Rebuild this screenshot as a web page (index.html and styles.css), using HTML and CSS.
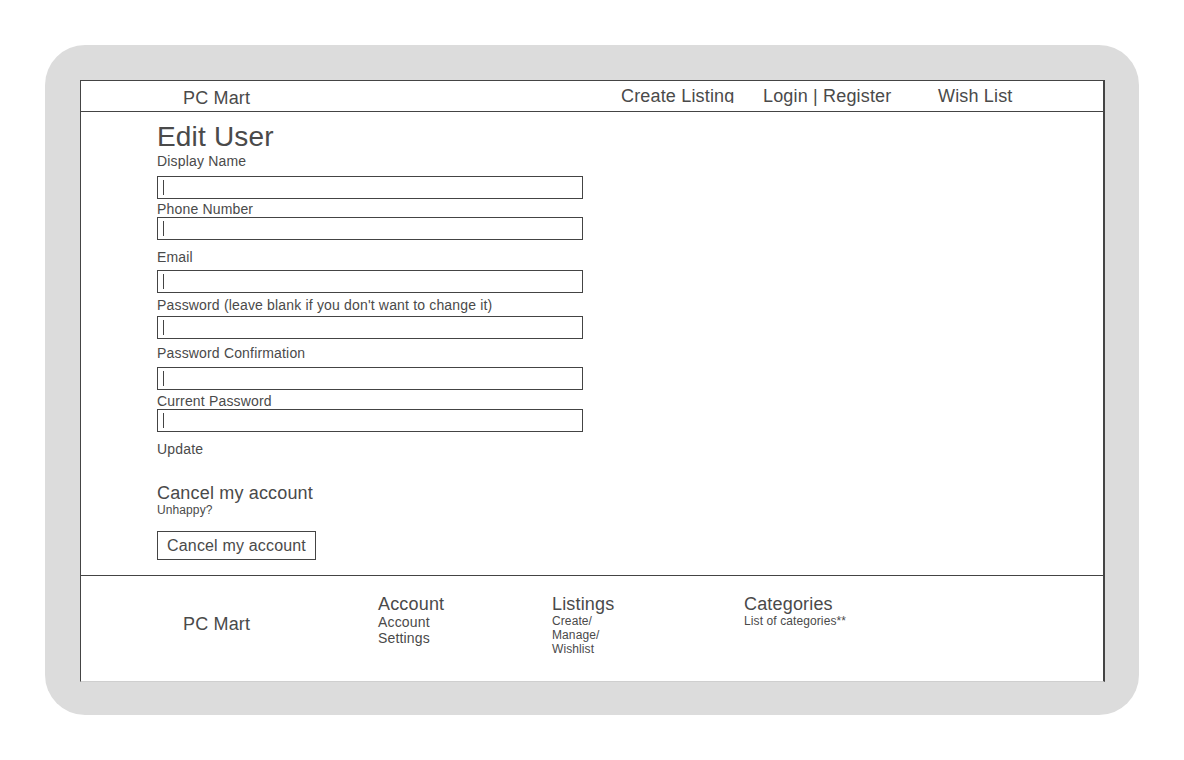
FILE: index.html
```html
<!DOCTYPE html>
<html lang="en">
<head>
<meta charset="utf-8">
<title>PC Mart - Edit User</title>
<link rel="stylesheet" href="styles.css">
</head>
<body>
<div class="frame">
  <div class="panel">
    <header class="topbar">
      <div class="brand">PC Mart</div>
      <div class="nav nav-create"><span class="clip">Create Listing</span></div>
      <div class="nav nav-login">Login | Register</div>
      <div class="nav nav-wish">Wish List</div>
    </header>
    <main class="content">
      <h1 class="title">Edit User</h1>
      <div class="label">Display Name</div>
      <div class="field f1"></div>
      <div class="label l2">Phone Number</div>
      <div class="field f2"></div>
      <div class="label l3">Email</div>
      <div class="field f3"></div>
      <div class="label l4">Password (leave blank if you don't want to change it)</div>
      <div class="field f4"></div>
      <div class="label l5">Password Confirmation</div>
      <div class="field f5"></div>
      <div class="label l6">Current Password</div>
      <div class="field f6"></div>
      <div class="label l7">Update</div>
      <h2 class="subtitle">Cancel my account</h2>
      <div class="small">Unhappy?</div>
      <div class="button">Cancel my account</div>
    </main>
    <footer class="footer">
      <div class="fbrand">PC Mart</div>
      <div class="fcol fcol-account">
        <div class="fhead">Account</div>
        <div class="fmid">Account<br>Settings</div>
      </div>
      <div class="fcol fcol-listings">
        <div class="fhead">Listings</div>
        <div class="fsmall">Create/<br>Manage/<br>Wishlist</div>
      </div>
      <div class="fcol fcol-cat">
        <div class="fhead">Categories</div>
        <div class="fsmall">List of categories**</div>
      </div>
    </footer>
  </div>
</div>
</body>
</html>
```
FILE: styles.css
```css
* { box-sizing: border-box; }
html, body { margin: 0; padding: 0; background: #ffffff; }
body {
  font-family: "Liberation Sans", Arial, sans-serif;
  color: #4a4a4a;
  letter-spacing: 0.17px;
  width: 1184px;
  height: 760px;
  overflow: hidden;
}
.frame {
  margin: 45px 0 0 45px;
  width: 1094px;
  height: 670px;
  background: #dcdcdc;
  border-radius: 40px;
  padding: 35px 0 0 35px;
}
.panel {
  width: 1025px;
  height: 602px;
  background: #ffffff;
  border-top: 1px solid #444;
  border-left: 1px solid #444;
  border-right: 2px solid #444;
  border-bottom: 1px solid #cfcfcf;
  display: flex;
  flex-direction: column;
}
.topbar {
  height: 31px;
  border-bottom: 1px solid #444;
  display: flex;
  align-items: flex-start;
  font-size: 18px;
  line-height: 20px;
  flex: none;
}
.brand { margin: 7px 0 0 102px; width: 438px; }
.nav { margin-top: 5px; }
.nav-create { width: 142px; height: 17px; overflow: hidden; }
.nav-login { width: 175px; }
.content {
  flex: 1;
  padding: 9px 0 0 76px;
}
.title {
  margin: 0;
  font-size: 28px;
  font-weight: normal;
  line-height: 32px;
}
.label {
  font-size: 14px;
  line-height: 16px;
}
.field {
  position: relative;
  width: 426px;
  height: 23px;
  border: 1px solid #444;
}
.field::after {
  content: "";
  position: absolute;
  left: 5px;
  top: 3px;
  width: 1px;
  height: 15px;
  background: #444;
}
.f1 { margin-top: 7px; }
.l2 { margin-top: 2px; }
.l3 { margin-top: 9px; }
.f3 { margin-top: 5px; }
.l4 { margin-top: 4px; }
.f4 { margin-top: 3px; }
.l5 { margin-top: 6px; }
.f5 { margin-top: 6px; }
.l6 { margin-top: 3px; }
.l7 { margin-top: 9px; }
.subtitle {
  margin: 26px 0 0 0;
  font-size: 18px;
  font-weight: normal;
  line-height: 20px;
}
.small { font-size: 12px; line-height: 14px; letter-spacing: 0.1px; }
.button {
  display: inline-block;
  margin-top: 14px;
  width: 159px;
  height: 29px;
  border: 1px solid #444;
  font-size: 16px;
  line-height: 27px;
  text-align: center;
}
.footer {
  flex: none;
  height: 106px;
  border-top: 1px solid #444;
  display: flex;
  align-items: flex-start;
}
.fbrand {
  font-size: 18px;
  line-height: 20px;
  margin: 38px 0 0 102px;
  width: 195px;
}
.fcol { margin-top: 18px; }
.fcol-account { width: 174px; }
.fcol-listings { width: 192px; }
.fhead { font-size: 18px; line-height: 20px; }
.fmid { font-size: 14px; line-height: 16px; }
.fsmall { font-size: 12px; line-height: 14px; letter-spacing: 0.1px; }
```
